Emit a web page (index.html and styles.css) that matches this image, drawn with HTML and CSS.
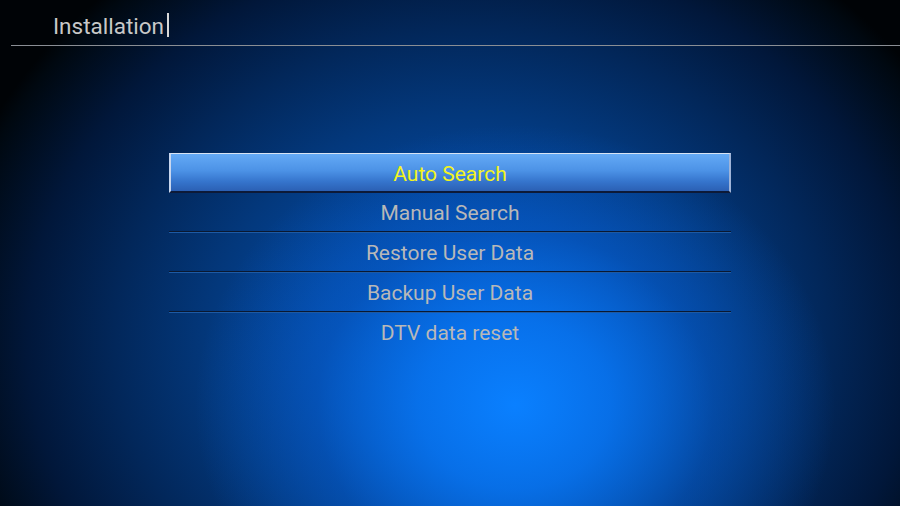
FILE: index.html
```html
<!DOCTYPE html>
<html>
<head>
<meta charset="utf-8">
<link rel="stylesheet" href="styles.css">
</head>
<body>
<div class="screen">
  <header class="header">
    <h1 class="title">Installation</h1><span class="cursor"></span>
  </header>
  <div class="rule"></div>
  <ul class="menu">
    <li class="item selected">Auto Search</li>
    <li class="item">Manual Search</li>
    <li class="item">Restore User Data</li>
    <li class="item">Backup User Data</li>
    <li class="item last">DTV data reset</li>
  </ul>
</div>
</body>
</html>
```

FILE: styles.css
```css
html, body {
  margin: 0;
  padding: 0;
  width: 900px;
  height: 506px;
  overflow: hidden;
  background: #000;
}
.screen {
  width: 900px;
  height: 506px;
  background:
    radial-gradient(ellipse 320px 280px at 515px 405px,
      rgba(10, 128, 255, 1) 0%, rgba(8, 118, 244, 0.85) 30%, rgba(6, 96, 214, 0.45) 62%, rgba(6, 90, 210, 0) 100%),
    radial-gradient(ellipse 540px 470px at 470px 340px,
      #0558c0 0%, #0448a0 28%, #03387c 48%, #02275a 66%, #01173a 82%, #000810 97%, #000306 100%);
  font-family: Roboto, "Noto Sans", sans-serif;
  display: flex;
  flex-direction: column;
}
.header {
  display: flex;
  align-items: flex-start;
  padding: 13px 0 0 53px;
  height: 26px;
}
.title {
  margin: 0;
  font-size: 22.5px;
  font-weight: 400;
  color: #c8c8c8;
  line-height: 27px;
}
.cursor {
  width: 2px;
  height: 24px;
  background: #d8d8d8;
  margin-left: 3px;
}
.rule {
  margin: 6px 0 0 11px;
  height: 1px;
  background: #8a8e94;
}
.menu {
  list-style: none;
  margin: 107px 0 0 169px;
  padding: 0;
  width: 562px;
}
.item {
  height: 38px;
  line-height: 40px;
  text-align: center;
  font-size: 21px;
  color: #b8b8b8;
  border-bottom: 1px solid #0a1830;
  box-shadow: 0 1px 0 #1d5aa4;
  margin-bottom: 1px;
}
.item.last {
  border-bottom: none;
  box-shadow: none;
}
.selected {
  color: #f4f41c;
  height: 37px;
  line-height: 40px;
  background: linear-gradient(to bottom, #64aaf6 0%, #4c92e6 45%, #3574cc 75%, #2b60b4 100%);
  border-top: 1px solid #d8e4f4;
  border-left: 2px solid #c8d6ee;
  border-right: 2px solid #9fb4d8;
  border-bottom: 2px solid #0d1a38;
  box-shadow: none;
  margin-bottom: 0;
  width: 558px;
}
```
